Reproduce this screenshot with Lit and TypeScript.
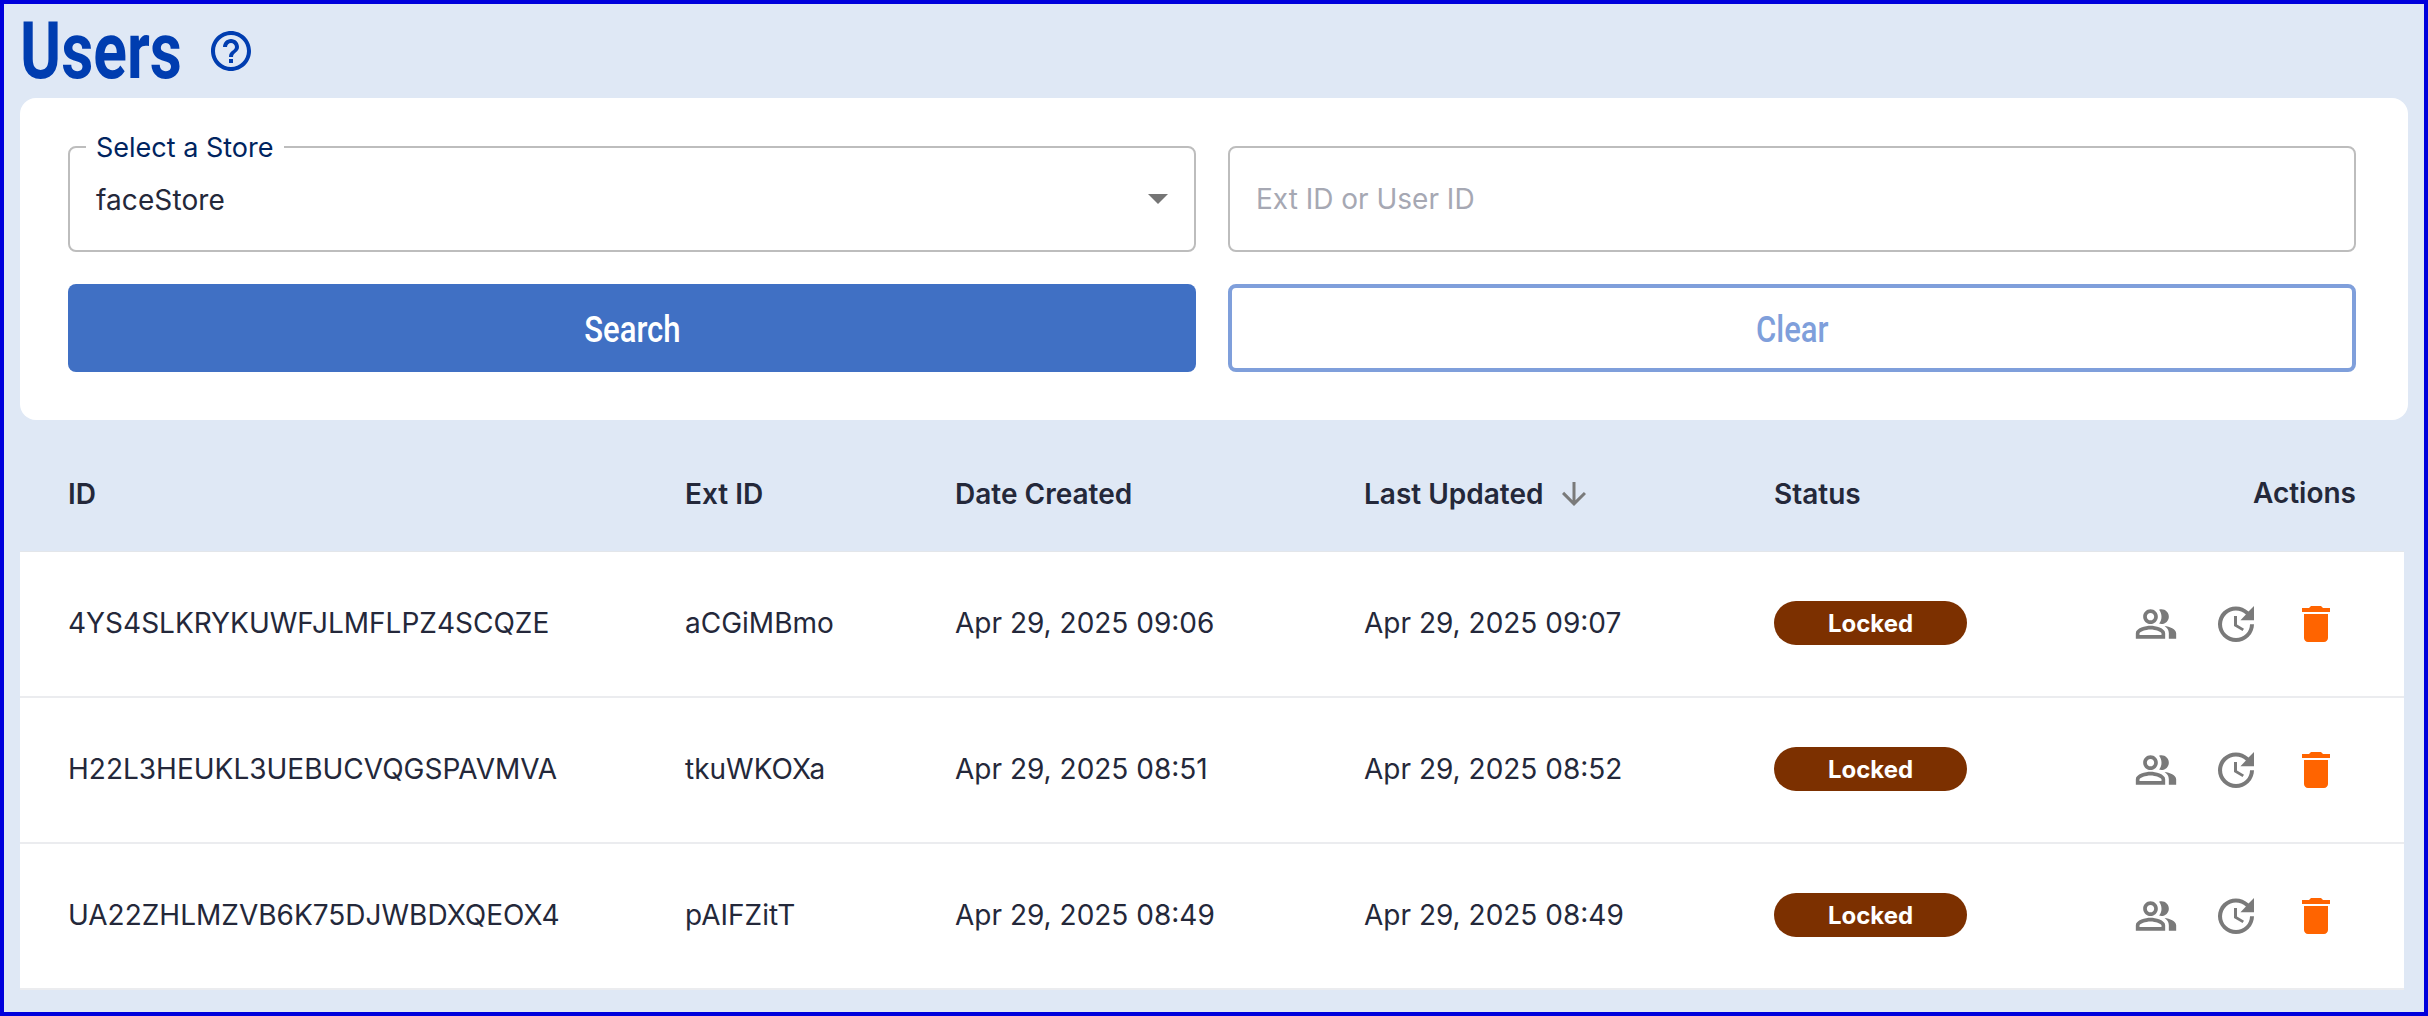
import { LitElement, html, css, svg } from "lit";
import { customElement } from "lit/decorators.js";

const rows = [
  ["4YS4SLKRYKUWFJLMFLPZ4SCQZE", "aCGiMBmo", "Apr 29, 2025 09:06", "Apr 29, 2025 09:07"],
  ["H22L3HEUKL3UEBUCVQGSPAVMVA", "tkuWKOXa", "Apr 29, 2025 08:51", "Apr 29, 2025 08:52"],
  ["UA22ZHLMZVB6K75DJWBDXQEOX4", "pAIFZitT", "Apr 29, 2025 08:49", "Apr 29, 2025 08:49"],
];

const people = svg`<path d="M16.67 13.13C18.04 14.06 19 15.32 19 17v3h4v-3c0-2.18-3.57-3.47-6.33-3.87zM15 12c2.21 0 4-1.79 4-4s-1.79-4-4-4c-.47 0-.91.1-1.33.24C14.5 5.27 15 6.58 15 8s-.5 2.73-1.33 3.76c.42.14.86.24 1.33.24zM9 12c2.21 0 4-1.79 4-4s-1.79-4-4-4-4 1.79-4 4 1.79 4 4 4zm0-6c1.1 0 2 .9 2 2s-.9 2-2 2-2-.9-2-2 .9-2 2-2zM9 13c-2.67 0-8 1.34-8 4v3h16v-3c0-2.66-5.33-4-8-4zm6 5H3v-.99C3.2 16.29 6.3 15 9 15s5.8 1.29 6 2z"/>`;
const update = svg`<path d="M21 10.12h-6.78l2.74-2.82c-2.73-2.7-7.15-2.8-9.88-.1-2.73 2.71-2.73 7.08 0 9.79s7.15 2.71 9.88 0C18.32 15.65 19 14.08 19 12.1h2c0 1.98-.88 4.55-2.64 6.29-3.51 3.48-9.21 3.48-12.72 0-3.5-3.47-3.53-9.11-.02-12.58s9.14-3.47 12.65 0L21 3v7.12zM12.5 8v4.25l3.5 2.08-.72 1.21L11 13V8h1.5z"/>`;
const trash = svg`<path d="M6 19c0 1.1.9 2 2 2h8c1.1 0 2-.9 2-2V7H6v12zM19 4h-3.5l-1-1h-5l-1 1H5v2h14V4z"/>`;
const help = svg`<path d="M11 18h2v-2h-2v2zm1-16C6.48 2 2 6.48 2 12s4.48 10 10 10 10-4.48 10-10S17.52 2 12 2zm0 18c-4.41 0-8-3.59-8-8s3.59-8 8-8 8 3.59 8 8-3.59 8-8 8zm0-14c-2.21 0-4 1.79-4 4h2c0-1.1.9-2 2-2s2 .9 2 2c0 2-3 1.75-3 5h2c0-2.25 3-2.5 3-5 0-2.21-1.79-4-4-4z"/>`;
const arrow = svg`<path d="M20 12l-1.41-1.41L13 16.17V4h-2v12.17l-5.58-5.59L4 12l8 8 8-8z"/>`;

@customElement("app-root")
export class AppRoot extends LitElement {
  static styles = css`
    :host {
      display: block;
      box-sizing: border-box;
      width: 2428px;
      height: 1016px;
      border: 4px solid #0000dc;
      background: #dfe8f5;
      padding: 0 16px;
      font-family: Inter, "Liberation Sans", sans-serif;
      color: #24283a;
      overflow: hidden;
    }
    .head {
      height: 94px;
      display: flex;
      align-items: center;
    }
    .title {
      display: inline-block;
      font-family: Roboto, sans-serif;
      font-weight: 700;
      font-size: 79px;
      line-height: 94px;
      color: #003db0;
      transform: scaleX(0.79);
      transform-origin: left center;
      width: 187px;
      white-space: nowrap;
    }
    .head svg { width: 48px; height: 48px; fill: #003db0; }
    .card {
      background: #fff;
      border-radius: 16px;
      padding: 48px 48px 48px;
      display: grid;
      grid-template-columns: 1128px 1128px;
      column-gap: 32px;
      row-gap: 32px;
      height: 322px;
      box-sizing: border-box;
    }
    .field {
      box-sizing: border-box;
      height: 106px;
      border: 2px solid #bdbdbd;
      border-radius: 8px;
      display: flex;
      align-items: center;
      justify-content: space-between;
      padding: 0 26px;
      font-size: 28px;
      position: relative;
    }
    .value { letter-spacing: 0.1px; padding-top: 1px; }
    .legend {
      position: absolute;
      top: -15px;
      left: 16px;
      background: #fff;
      padding: 0 10px;
      font-size: 27px;
      line-height: 30px;
      color: #00245f;
    }
    .caret {
      width: 0;
      height: 0;
      border-left: 10px solid transparent;
      border-right: 10px solid transparent;
      border-top: 10px solid #757575;
    }
    .ph { color: #a6a8b3; }
    .btn {
      box-sizing: border-box;
      height: 88px;
      border-radius: 8px;
      display: flex;
      align-items: center;
      justify-content: center;
      font-family: Roboto, sans-serif;
      font-weight: 500;
      font-size: 37px;
      padding-top: 2px;
    }
    .btn span { display: inline-block; transform: scaleX(0.84); }
    .primary { background: #4070c4; color: #fff; }
    .outline { border: 4px solid #7f9fdb; color: #7f9fdb; background: #fff; }
    .grid {
      display: grid;
      grid-template-columns: 665px 270px 409px 410px 1fr;
      width: 2384px;
      align-items: center;
    }
    .thead {
      height: 132px;
      box-sizing: border-box;
      padding-top: 17px;
      font-weight: 600;
      font-size: 28px;
      border-bottom: 1px solid #e3e6ea;
    }
    .thead > div:first-child, .row > div:first-child { padding-left: 48px; }
    .sort { display: flex; align-items: center; gap: 12px; }
    .sort svg { width: 36px; height: 36px; fill: #7a7a7a; }
    .actions-h { margin-right: -16px; margin-top: -3px; }
    .row {
      height: 146px;
      box-sizing: border-box;
      background: #fff;
      font-size: 28px;
      border-bottom: 2px solid #ebecef;
    }
    .cell { padding-bottom: 2px; }
    .pill {
      width: 193px;
      height: 44px;
      border-radius: 22px;
      background: #7c3000;
      color: #fff;
      font-weight: 700;
      font-size: 24px;
      display: flex;
      align-items: center;
      justify-content: center;
      margin-bottom: 2px;
    }
    .last { display: flex; justify-content: space-between; align-items: center; padding-right: 64px; }
    .acts { display: flex; align-items: center; gap: 32px; }
    .acts svg { width: 48px; height: 48px; fill: #7a7a7a; display: block; }
    .acts svg.ppl { width: 44px; height: 44px; margin: 0 2px; }
    .acts svg.del { fill: #ff6400; }
  `;

  render() {
    return html`
      <div class="head">
        <span class="title">Users</span>
        <svg viewBox="0 0 24 24">${help}</svg>
      </div>
      <div class="card">
        <div class="field">
          <span class="legend">Select a Store</span>
          <span class="value">faceStore</span>
          <span class="caret"></span>
        </div>
        <div class="field"><span class="ph">Ext ID or User ID</span></div>
        <div class="btn primary"><span>Search</span></div>
        <div class="btn outline"><span>Clear</span></div>
      </div>
      <div class="grid thead">
        <div>ID</div>
        <div>Ext ID</div>
        <div>Date Created</div>
        <div class="sort">Last Updated <svg viewBox="0 0 24 24">${arrow}</svg></div>
        <div class="last"><span>Status</span><span class="actions-h">Actions</span></div>
      </div>
      ${rows.map(
        (r) => html`
          <div class="grid row">
            <div class="cell">${r[0]}</div>
            <div class="cell">${r[1]}</div>
            <div class="cell">${r[2]}</div>
            <div class="cell">${r[3]}</div>
            <div class="last">
              <div class="pill">Locked</div>
              <div class="acts">
                <svg class="ppl" viewBox="0 0 24 24">${people}</svg>
                <svg viewBox="0 0 24 24">${update}</svg>
                <svg class="del" viewBox="0 0 24 24">${trash}</svg>
              </div>
            </div>
          </div>
        `
      )}
    `;
  }
}
